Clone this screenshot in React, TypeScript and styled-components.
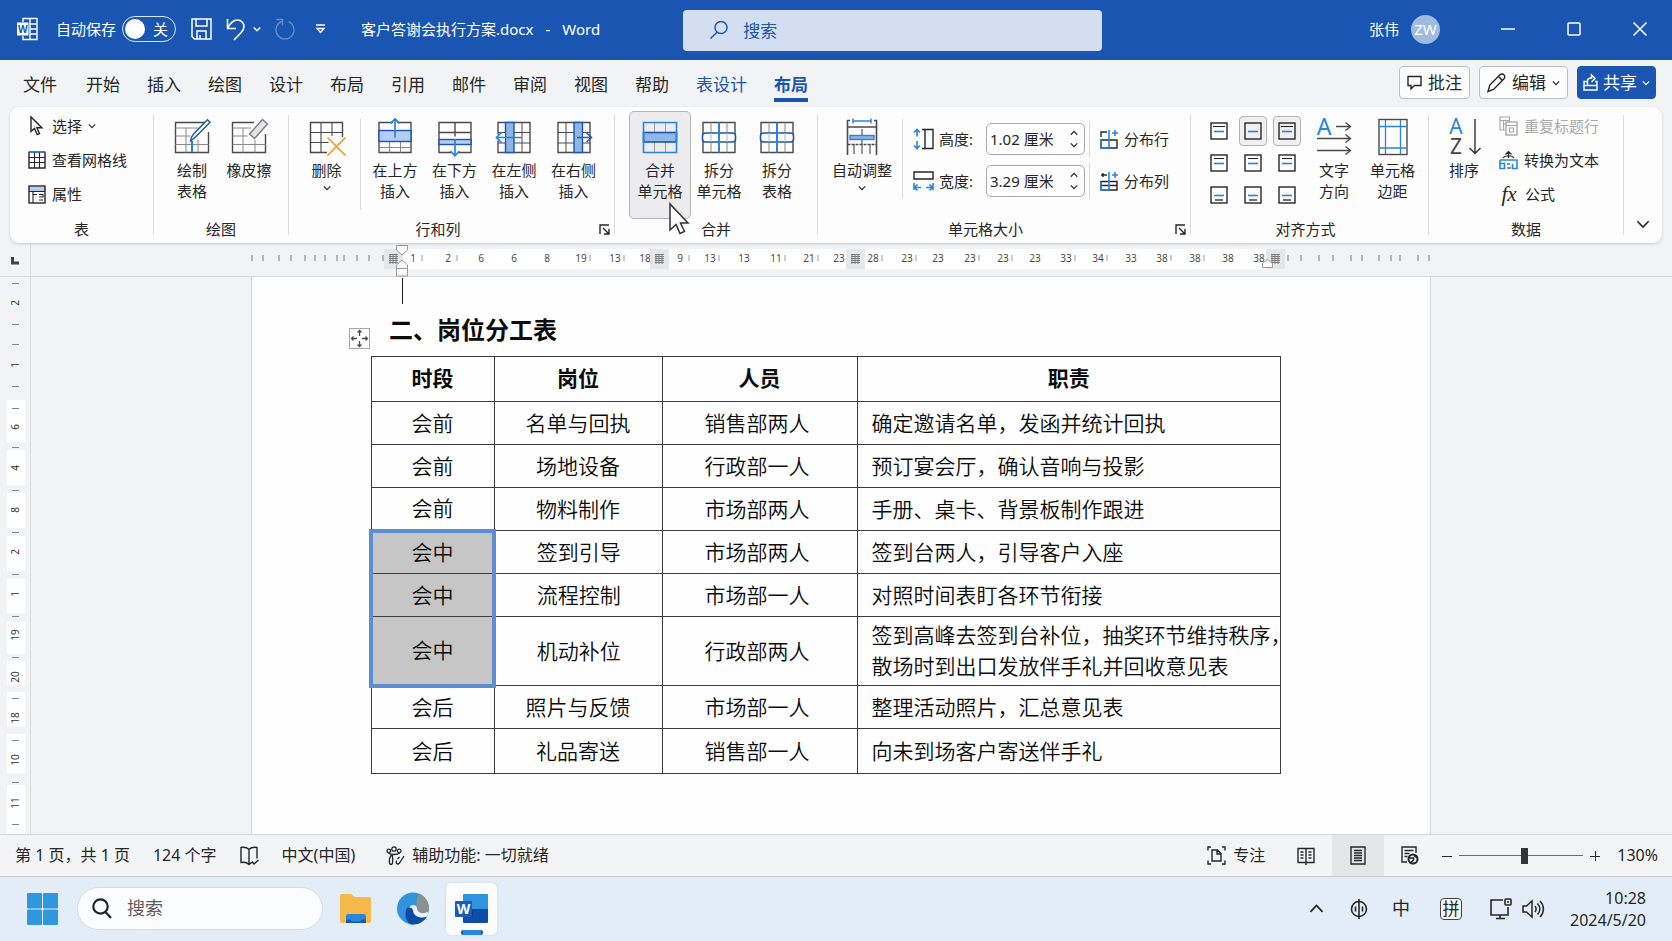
import React from "react";
import styled, { createGlobalStyle, css } from "styled-components";

const blue = "#1a56b1";
const azure = "#2b84dc";
const ink = "#262626";

const GlobalStyle = createGlobalStyle`
  * { box-sizing: border-box; }
  body {
    margin: 0;
    background: #f1f3f5;
    color: ${ink};
    font-family: "Noto Sans", "Noto Sans CJK SC", sans-serif;
    font-size: 15px;
    line-height: 21px;
  }
  button, input { font: inherit; color: inherit; }
  svg { display: block; flex: none; overflow: visible; }
`;

const Window = styled.div`
  display: flex;
  flex-direction: column;
  min-height: 100vh;
  overflow: hidden;
`;

const PlainButton = styled.button`
  display: flex;
  align-items: center;
  justify-content: center;
  padding: 0;
  border: 0;
  background: none;
  white-space: nowrap;
`;

/* ---------- title bar ---------- */

const TitleBar = styled.header`
  display: flex;
  align-items: center;
  height: 60px;
  padding: 0 24px 2px 17px;
  background: ${blue};
  color: #fff;
  white-space: nowrap;
`;

const AutoSave = styled.label`
  display: flex;
  align-items: center;
  gap: 6px;
  margin: 0 15px 0 18px;
`;

const ToggleTrack = styled.span`
  display: flex;
  align-items: center;
  gap: 8px;
  width: 54px;
  height: 26px;
  padding: 0 2px;
  border: 1px solid #dbe6f6;
  border-radius: 13px;
`;

const ToggleKnob = styled.input`
  appearance: none;
  width: 20px;
  height: 20px;
  margin: 0;
  border-radius: 50%;
  background: #fff;
`;

const QuickTools = styled.div`
  display: flex;
  align-items: center;
  gap: 14px;
  > :last-child { margin-left: 6px; }
`;

const UndoButton = styled(PlainButton)`
  gap: 8px;
`;

const DocName = styled.div`
  display: flex;
  gap: 12px;
  margin-left: 35px;
`;

const TitleSearch = styled.label`
  display: flex;
  align-items: center;
  gap: 14px;
  width: 419px;
  height: 41px;
  margin: 2px auto 0 83px;
  padding-left: 26px;
  border-radius: 4px;
  background: #d3dff0;
  color: #2056a8;
  font-size: 17px;
`;

const BareInput = styled.input`
  flex: 1;
  min-width: 0;
  width: 0;
  padding: 0;
  border: 0;
  outline: 0;
  background: none;
  &::placeholder { color: inherit; opacity: 1; }
`;

const Account = styled(PlainButton)`
  gap: 12px;
`;

const Avatar = styled.span`
  width: 29px;
  height: 29px;
  border-radius: 50%;
  background: #9fbbdf;
  line-height: 29px;
  text-align: center;
`;

const WindowButtons = styled.div`
  display: flex;
  gap: 50px;
  margin-left: 60px;
`;

/* ---------- tabs ---------- */

const TabRow = styled.div`
  display: flex;
  align-items: center;
  justify-content: space-between;
  height: 47px;
  padding: 2px 16px 0 23px;
`;

const Tabs = styled.nav`
  display: flex;
  gap: 27px;
`;

const Tab = styled.button<{ $tone?: "accent" | "current" }>`
  padding: 0;
  border: 0;
  background: none;
  font-size: 17px;
  line-height: 26px;
  white-space: nowrap;
  &:first-child { margin-right: 2px; }
  border-top: 4px solid transparent;
  border-bottom: 4px solid transparent;
  ${(p) => p.$tone && css`color: ${blue};`}
  ${(p) => p.$tone === "current" && css`font-weight: 700; border-bottom-color: ${blue};`}
`;

const TabActions = styled.div`
  display: flex;
  gap: 9px;
  margin-bottom: 4px;
`;

const ActionButton = styled(PlainButton)<{ $primary?: boolean }>`
  gap: ${(p) => (p.$primary ? 5 : 6)}px;
  height: 33px;
  padding: 0 ${(p) => (p.$primary ? 5 : 7)}px;
  border: 1px solid ${(p) => (p.$primary ? blue : "#bdbfc1")};
  border-radius: 4px;
  background: ${(p) => (p.$primary ? blue : "#fdfdfd")};
  color: ${(p) => (p.$primary ? "#fff" : ink)};
  font-size: 17px;
  line-height: 24px;
`;

/* ---------- ribbon ---------- */

const Ribbon = styled.section`
  display: flex;
  height: 136px;
  margin: 0 10px;
  border-radius: 9px;
  background: #fdfdfd;
  box-shadow: 0 1px 3px rgba(0, 0, 0, 0.18);
  position: relative;
`;

const Group = styled.div<{ $width: number }>`
  display: flex;
  flex-direction: column;
  flex: none;
  width: ${(p) => p.$width}px;
  padding-top: 4px;
`;

const GroupBody = styled.div<{ $inset: number }>`
  display: flex;
  align-items: flex-start;
  height: 107px;
  padding-left: ${(p) => p.$inset}px;
`;

const GroupFooter = styled.div<{ $trail: number }>`
  display: flex;
  align-items: center;
  height: 22px;
  > span { flex: 1; padding-right: ${(p) => p.$trail}px; text-align: center; }
  > button { margin-right: 4px; }
`;

const Divider = styled.div<{ $inner?: boolean }>`
  flex: none;
  align-self: stretch;
  width: 1px;
  margin: ${(p) => (p.$inner ? "8px 4px" : "8px 0")};
  background: #d9dadb;
`;

const ShortDivider = styled(Divider)`
  height: 79px;
  align-self: flex-start;
  margin: 8px 10px;
`;

const BigButton = styled.button<{ $width: number; $hot?: boolean }>`
  position: relative;
  display: flex;
  flex-direction: column;
  align-items: center;
  flex: none;
  gap: 3px;
  width: ${(p) => p.$width}px;
  height: 108px;
  padding: 4px 0 0;
  border: 1px solid ${(p) => (p.$hot ? "#b4b5b6" : "transparent")};
  border-radius: 5px;
  background: ${(p) => (p.$hot ? "#ececee" : "none")};
  line-height: 21px;
  white-space: nowrap;
`;

const PointerArrow = styled.svg`
  position: absolute;
  left: 38px;
  top: 90px;
  z-index: 2;
`;

const Stack = styled.div<{ $lead?: number }>`
  display: flex;
  flex-direction: column;
  gap: 4px;
  margin-left: ${(p) => p.$lead ?? 0}px;
`;

const RowButton = styled.button<{ $dim?: boolean }>`
  display: flex;
  align-items: center;
  gap: 6px;
  height: 30px;
  padding: 0;
  border: 0;
  background: none;
  white-space: nowrap;
  ${(p) => p.$dim && css`color: #a8a9aa;`}
`;

const SizeRows = styled.div`
  display: flex;
  flex-direction: column;
  gap: 10px;
  padding-top: 12px;
`;

const SizeRow = styled.div`
  display: flex;
  align-items: center;
  height: 32px;
`;

const SizeLabel = styled.label`
  width: 52px;
  padding-left: 5px;
  flex: none;
`;

const Spinner = styled.div`
  display: flex;
  width: 99px;
  height: 32px;
  padding: 0 6px 0 3px;
  border: 1px solid #a9abad;
  border-radius: 5px;
`;

const SpinnerArrows = styled.div`
  display: flex;
  flex-direction: column;
  justify-content: space-evenly;
`;

const RowDivider = styled.div`
  width: 1px;
  height: 36px;
  margin: 0 10px 0 4px;
  background: #d9dadb;
`;

const AlignGrid = styled.div`
  display: grid;
  grid-template-columns: repeat(3, 28px);
  gap: 2px 6px;
  padding-top: 5px;
  margin-right: 4px;
`;

const AlignButton = styled(PlainButton)<{ $on?: boolean }>`
  height: 30px;
  border: 1px solid ${(p) => (p.$on ? "#b1b2b3" : "transparent")};
  border-radius: 4px;
  background: ${(p) => (p.$on ? "#f0f0f0" : "none")};
`;

const Formula = styled.span`
  width: 20px;
  font: italic 21px/24px "Liberation Serif", serif;
`;

const Collapse = styled(PlainButton)`
  margin: auto 12px 12px auto;
`;

/* ---------- document ---------- */

const Workspace = styled.main`
  display: grid;
  flex: 1;
  grid-template-columns: 31px minmax(0, 1fr);
  grid-template-rows: 34px 1fr;
`;

const RulerCorner = styled.div`
  padding: 14px 0 0 11px;
  border-right: 1px solid #d9dbdd;
  border-bottom: 1px solid #d9dbdd;
`;

const TopRuler = styled.div`
  display: flex;
  justify-content: center;
  padding-right: 21px;
  border-bottom: 1px solid #d4d6d8;
`;

const SideRuler = styled.div`
  border-right: 1px solid #d9dbdd;
`;

const Desk = styled.div`
  display: flex;
  justify-content: center;
  padding-right: 21px;
`;

const Paper = styled.article`
  width: 1180px;
  padding: 0 148px 48px 97px;
  border: solid #d4d6d8;
  border-width: 0 1px;
  background: #fefefe;
  color: #0c0c0c;
`;

const CaretLine = styled.div`
  width: 54px;
  height: 26px;
  margin-top: 1px;
  border-right: 1px solid #222;
`;

const HeadingRow = styled.div`
  display: flex;
  align-items: flex-end;
  height: 52px;
  padding-bottom: 7px;
`;

const Heading = styled.h2`
  margin: 0 0 1px 19px;
  font-size: 24px;
  font-weight: 700;
  line-height: 36px;
`;

const Sheet = styled.table`
  width: 912px;
  margin-left: 20px;
  border-collapse: collapse;
  table-layout: fixed;
  font-family: "Noto Sans CJK SC", sans-serif;
  font-size: 21px;
  line-height: 31px;
`;

const HeadCell = styled.th`
  height: 45px;
  padding: 0 0 3px;
  border: 1px solid #3c3c3c;
  font-weight: 700;
`;

const Cell = styled.td<{ $left?: boolean; $trail?: number; $pick?: "first" | "mid" | "last" }>`
  height: 43px;
  padding: 2px ${(p) => p.$trail ?? 0}px 4px ${(p) => (p.$left ? 14 : 0)}px;
  border: 1px solid #3c3c3c;
  text-align: ${(p) => (p.$left ? "left" : "center")};
  font-weight: 350;
  white-space: nowrap;
  tr:last-child > & { height: 45px; }
  ${(p) =>
    p.$pick &&
    css`
      background: #c6c6c6;
      border-left: 4px solid #5b8fd0;
      border-right: 4px solid #5b8fd0;
    `}
  ${(p) => p.$pick === "first" && css`border-top: 4px solid #5b8fd0;`}
  ${(p) => p.$pick === "last" && css`border-bottom: 4px solid #5b8fd0;`}
`;

/* ---------- status bar ---------- */

const StatusBar = styled.footer`
  display: flex;
  align-items: center;
  justify-content: space-between;
  height: 43px;
  padding: 0 14px 0 15px;
  border-top: 1px solid #d4d6d8;
  border-bottom: 1px solid #c9ccd0;
  background: #f3f4f5;
  font-size: 16px;
  white-space: nowrap;
`;

const StatusSide = styled.div<{ $gap: number }>`
  display: flex;
  align-items: center;
  gap: ${(p) => p.$gap}px;
  height: 100%;
`;

const StatusButton = styled(PlainButton)<{ $after?: number; $before?: number }>`
  gap: 7px;
  margin: 0 ${(p) => p.$after ?? 0}px 0 ${(p) => p.$before ?? 0}px;
`;

const ViewButton = styled(PlainButton)<{ $on?: boolean }>`
  width: 52px;
  height: 100%;
  background: ${(p) => (p.$on ? "#e5e6e7" : "none")};
`;

const Zoom = styled.div`
  display: flex;
  align-items: center;
  gap: 7px;
  margin: 0 17px 0 6px;
`;

const ZoomSlider = styled.input`
  appearance: none;
  width: 124px;
  height: 16px;
  margin: 0;
  background: linear-gradient(#6b6b6b, #6b6b6b) center / 100% 1px no-repeat;
  &::-webkit-slider-thumb {
    appearance: none;
    width: 7px;
    height: 16px;
    background: #333;
  }
`;

/* ---------- taskbar ---------- */

const Taskbar = styled.footer`
  display: flex;
  align-items: center;
  height: 64px;
  padding: 0 26px 1px 27px;
  background: #e3edf8;
  white-space: nowrap;
`;

const TaskSearch = styled.label`
  display: flex;
  align-items: center;
  gap: 15px;
  width: 246px;
  height: 43px;
  margin: 0 17px 0 19px;
  padding-left: 14px;
  border: 1px solid #d5dbe3;
  border-radius: 22px;
  background: #fbfcfd;
  color: #5c5c5c;
  font-size: 18px;
`;

const Apps = styled.div`
  display: flex;
  align-items: center;
  gap: 26px;
`;

const ActiveApp = styled(PlainButton)`
  flex-direction: column;
  justify-content: flex-end;
  gap: 5px;
  width: 51px;
  height: 52px;
  margin-left: -9px;
  border-radius: 5px;
  background: #fafcfe;
  box-shadow: 0 0 2px rgba(0, 0, 0, 0.15);
`;

const ActiveMark = styled.span`
  width: 22px;
  height: 5px;
  border-radius: 2px;
  background: linear-gradient(90deg, ${blue} 10%, #2a86d8 10%, #2a86d8 90%, ${blue} 90%);
`;

const Tray = styled.div`
  display: flex;
  align-items: center;
  gap: 26px;
  margin-left: auto;
`;

const ImeMode = styled(PlainButton)`
  margin: 0 4px 0 -2px;
  font-size: 18px;
`;

const ImeBox = styled(PlainButton)`
  width: 22px;
  height: 22px;
  margin-right: 2px;
  border: 1px solid #444;
  border-radius: 4px;
  background: #f6f9fc;
  font-size: 17px;
`;

const SystemButton = styled(PlainButton)`
  gap: 10px;
`;

const Clock = styled.time`
  font-size: 16px;
  line-height: 22px;
  text-align: right;
`;

/* ---------- drawings ---------- */

const line = { fill: "none", stroke: "currentColor", strokeWidth: 1.4 } as const;

const Chevron = ({ w = 8, up = false, width = 1.4 }: { w?: number; up?: boolean; width?: number }) => (
  <svg width={w} height={w} viewBox="0 0 10 10" {...line} strokeWidth={width}>
    <path d={up ? "M1 7.2 5 3l4 4.2" : "M1 3l4 4.2L9 3"} />
  </svg>
);

const WordOutline = () => (
  <svg width="21" height="24" viewBox="0 0 21 24" fill="none" stroke="#fff" strokeWidth="1.4">
    <path d="M6 5V1.5h14v21H6V19M13 7h7M13 12h7M13 17h7M13 1.5v21" />
    <rect x="0" y="5.500" width="11.500" height="13" fill="#fff" stroke="none" />
    <text x="5.800" y="15.500" textAnchor="middle" fontSize="10" fontWeight="700" fill={blue} stroke="none">W</text>
  </svg>
);

const SaveIcon = () => (
  <svg width="21" height="22" viewBox="0 0 21 22" fill="none" stroke="#fff" strokeWidth="1.5">
    <path d="M1 1h19v20H3.500L1 18.500zM5 1v7h11V1M6 21v-8h9v8M9 21v-4" />
  </svg>
);

const UndoIcon = () => (
  <svg width="19" height="23" viewBox="0 0 19 23" fill="none" stroke="#fff" strokeWidth="1.6">
    <path d="M1.500 1v9.500H10M1.800 10C4 5.500 7.500 2 11.500 2c4 0 6.500 3 6.500 6.500 0 2.500-1 4.200-3 6.200L8 22" />
  </svg>
);

const RedoIcon = () => (
  <svg width="20" height="22" viewBox="0 0 20 22" fill="none" stroke="#5f8ccf" strokeWidth="1.4">
    <path d="M1.500 1.500h6v6M6.800 3.500A9 9 0 1 0 13.500 3.600" />
  </svg>
);

const MenuMore = () => (
  <svg width="11" height="10" viewBox="0 0 11 10" fill="none" stroke="#fff" strokeWidth="1.4">
    <path d="M1 1h9M2 4.500h7L5.500 8.500z" />
  </svg>
);

const TitleSearchIcon = () => (
  <svg width="20" height="20" viewBox="0 0 20 20" fill="none" stroke="#2056a8" strokeWidth="1.5">
    <circle cx="12" cy="7.500" r="6" />
    <path d="M8 12.200 1.500 18.500" />
  </svg>
);

const CommentIcon = () => (
  <svg width="15" height="15" viewBox="0 0 15 15" {...line}>
    <path d="M1 1.500h13v9H7.500L4 13.800v-3.300H1z" />
  </svg>
);

const PencilIcon = () => (
  <svg width="19" height="20" viewBox="0 0 19 20" {...line}>
    <path d="M1 18.500 2.800 12 13 1.800c1.200-1.200 3-1 4 .1 1 1 1.100 2.700 0 3.800L6.800 16.200zM11.500 3.500l4.200 4.200" />
  </svg>
);

const ShareIcon = () => (
  <svg width="15" height="17" viewBox="0 0 15 17" {...line}>
    <path d="M4.500 7.500H1V16h13V7.500h-2M1 11.500h13M4.500 11.500V7C4.500 4.500 6 4 8.500 4V1L12 4.500 8.500 8" />
  </svg>
);

const BigIcon = ({ children }: { children: React.ReactNode }) => (
  <svg width="40" height="41" viewBox="0 0 40 41" fill="none" stroke="#4a4a4a" strokeWidth="1.4">
    {children}
  </svg>
);

const grid = "M4 6.500h32v30H4z";

const DrawTableIcon = () => (
  <BigIcon>
    <path d="M34 6.500H3.500v30h33V16" />
    <path d="M3.500 12H26M3.500 20h15M3.500 28.500h33M14 12v24.500M26 24v12.500" stroke="#8a8a8a" strokeWidth="1" />
    <path d="M18.500 25c.3-3.500 1.800-5.500 3.500-7.500L35.500 3.800l2.500 2.400L24.500 20c-2 2-4 3.500-6 5z" fill="#fff" stroke={blue} />
    <path d="M20 25v11" stroke={azure} strokeWidth="2" />
  </BigIcon>
);

const EraserIcon = () => (
  <BigIcon>
    <path d="M25 6.500H3.500v30h33V18" />
    <path d="M3.500 12H22M3.500 20h15M3.500 28.500h33M14 12v24.500M26 24v12.500" stroke="#8a8a8a" strokeWidth="1" />
    <path d="M20.500 18 33.500 3.500 38.500 8 25.500 22.500z" fill="#e4e5ea" stroke="#7a7a7a" />
  </BigIcon>
);

const DeleteIcon = () => (
  <BigIcon>
    <path d="M20 36.500H3.500v-30h32V21" />
    <path d="M3.500 16.500h32M3.500 26.500h18M14 6.500v30M25 6.500V20" strokeWidth="1.100" />
    <path d="M20.500 21.500l18 18M38.500 21.500l-18 18" stroke="#f0ad3c" strokeWidth="1.900" />
  </BigIcon>
);

const InsertAboveIcon = () => (
  <BigIcon>
    <path d={grid} />
    <path d="M14.500 26v10.500M25.500 26v10.500M4 31.500h32" stroke="#888" strokeWidth="1" />
    <rect x="4" y="14.500" width="32" height="11" fill="#b4cdee" stroke={blue} />
    <path d="M20 14V3" stroke="#fdfdfd" strokeWidth="4" />
    <path d="M20 21.500V3M15.500 7.500 20 2.800l4.500 4.700" stroke={azure} strokeWidth="1.700" />
  </BigIcon>
);

const InsertBelowIcon = () => (
  <BigIcon>
    <path d={grid} />
    <path d="M4 16.500h32M20 6.500v14" />
    <rect x="4" y="23.500" width="32" height="5" fill="#b4cdee" stroke={blue} />
    <path d="M20 30v10" stroke="#fdfdfd" strokeWidth="7" />
    <path d="M20 23v16.500M15.500 35 20 39.800l4.500-4.800" stroke={azure} strokeWidth="1.700" />
  </BigIcon>
);

const InsertLeftIcon = () => (
  <BigIcon>
    <path d={grid} />
    <path d="M4 16.500h32M4 27h32M28 6.500v30" strokeWidth="1" />
    <rect x="11.500" y="6.500" width="8.500" height="30" fill="#8fb5e6" stroke={blue} />
    <path d="M0 21.500h11" stroke="#fdfdfd" strokeWidth="6" />
    <path d="M28 21.500H2.500M7.500 16.500l-5 5 5 5" stroke={azure} strokeWidth="1.700" />
  </BigIcon>
);

const InsertRightIcon = () => (
  <BigIcon>
    <path d={grid} />
    <path d="M4 16.500h32M4 27h32M12 6.500v30" strokeWidth="1" />
    <rect x="20" y="6.500" width="8.500" height="30" fill="#8fb5e6" stroke={blue} />
    <path d="M29.500 21.500H35" stroke="#fdfdfd" strokeWidth="9" />
    <path d="M23 21.500h14M32.500 17l5 4.500-5 4.500" stroke="#2d5f9e" strokeWidth="1.600" />
  </BigIcon>
);

const MergeIcon = () => (
  <BigIcon>
    <path d="M14.500 6.500v30M25.500 6.500v30" stroke="#999" strokeWidth="1" />
    <rect x="3.500" y="16.500" width="33" height="9.500" fill="#8db9ea" stroke={blue} strokeWidth="1.600" />
    <path d="M3.500 6.500h33v30h-33z" stroke={azure} strokeWidth="1.600" />
  </BigIcon>
);

const SplitCellIcon = () => (
  <BigIcon>
    <path d={grid} />
    <path d="M12 6.500v30M28 6.500v30" stroke="#888" strokeWidth="1" />
    <rect x="3.500" y="17" width="33" height="9" rx="3" fill="#fdfdfd" stroke={blue} strokeWidth="1.600" />
    <path d="M12 17v9M28 17v9" stroke="#bbb" strokeWidth="1" />
    <path d="M20 6.500v30" stroke={azure} strokeWidth="2" />
  </BigIcon>
);

const AutoFitIcon = () => (
  <BigIcon>
    <path d="M5.500 4v35M34.500 4v35M5.500 11h29" strokeWidth="1.600" />
    <path d="M5.500 28.500h29" strokeDasharray="3 1" />
    <path d="M12 28v10M20 13v25M28 28v10" strokeWidth="1.100" />
    <path d="M5 4.500h3M32 4.500h3" />
    <path d="M11 5h18M11 2.500v5M29 2.500v5" stroke={azure} strokeWidth="1.500" />
    <rect x="8" y="19.500" width="24" height="4" fill="#8fb5e6" stroke={azure} />
  </BigIcon>
);

const TextDirectionIcon = () => (
  <BigIcon>
    <text x="10" y="19" textAnchor="middle" fontSize="23" fill={azure} stroke="none">A</text>
    <path d="M22 10.500h14M31.500 6.500l5 4-5 4M3 22.500h33.500M31.500 18.500l5 4-5 4M3 34.500h33.500M31.500 30.500l5 4-5 4" />
  </BigIcon>
);

const CellMarginIcon = () => (
  <BigIcon>
    <rect x="6" y="3.500" width="28" height="35" />
    <path d="M12.500 4v34M27.500 4v34M6.500 10.500h27M6.500 32h27" stroke={azure} strokeWidth="1.300" />
  </BigIcon>
);

const SortIcon = () => (
  <BigIcon>
    <text x="12" y="18" textAnchor="middle" fontSize="21" fill={azure} stroke="none">A</text>
    <text x="12" y="38" textAnchor="middle" fontSize="21" fill="#444" stroke="none">Z</text>
    <path d="M31 3v34M25.500 32l5.500 5.500 5.500-5.500" stroke="#333" />
  </BigIcon>
);

const ArrowIcon = () => (
  <svg width="18" height="20" viewBox="0 0 18 20" {...line}>
    <path d="M3 1v14.500l3.500-3 2.700 6.200 2.300-1-2.600-6h5z" />
  </svg>
);

const GridLinesIcon = () => (
  <svg width="18" height="18" viewBox="0 0 18 18" {...line}>
    <path d="M1 6.500h16M1 11.500h16M6.500 1v16M11.500 1v16" strokeWidth="1" />
    <path d="M1 1v16h16V1" />
    <path d="M.500 1h17" stroke={blue} strokeWidth="1.600" />
  </svg>
);

const PropertiesIcon = () => (
  <svg width="18" height="19" viewBox="0 0 18 19" {...line}>
    <path d="M1 4h16" stroke="#b4cdee" strokeWidth="4" />
    <rect x="1" y="1" width="16" height="17" />
    <path d="M1 6.500h16M5 6.500V18M5 9.500h4M11 9.500h4v2.500h-4M11 15h4" strokeWidth="1.100" />
  </svg>
);

const HeightIcon = () => (
  <svg width="21" height="22" viewBox="0 0 21 22" {...line}>
    <path d="M12 1.500h8v19h-8z" />
    <path d="M4 1.500v7M4 13v7M1 4.500l3-3 3 3M1 17.500l3 3 3-3" stroke={azure} strokeWidth="1.600" />
    <path d="M9 1.500h3M9 20.500h3" />
  </svg>
);

const WidthIcon = () => (
  <svg width="21" height="22" viewBox="0 0 21 22" {...line}>
    <path d="M1 2h19v7H1z" />
    <path d="M1 13v7M20 13v7M2 17.500h6M13 17.500h6M4.500 14.500l-3 3 3 3M16.500 14.500l3 3-3 3" stroke={azure} strokeWidth="1.600" />
  </svg>
);

const SpreadIcon = ({ rows }: { rows?: boolean }) => (
  <svg width="18" height="20" viewBox="0 0 18 20" {...line}>
    {rows ? <path d="M1 8V3h6M1 11h16v8H1z" /> : <path d="M1 10.500h16V19H1zM1 14.500h16M1 4h6M3 2v4" />}
    <path d="M9 1v18M12 4h6M15 1v6" stroke={azure} strokeWidth="1.600" />
    <path d="M1 10.500V19h8" stroke={azure} />
  </svg>
);

const AlignIcon = ({ row }: { row: number }) => (
  <svg width="18" height="18" viewBox="0 0 18 18" {...line}>
    <rect x="1" y="1" width="16" height="16" />
    {row === 0 && <path d="M3 4.500h12" strokeWidth="1.100" />}
    {row === 1 && <path d="M4 4.500h10" strokeWidth="1.100" />}
    {row === 2 && <path d="M5 14h8" strokeWidth="1.300" />}
    <path d="M4 9.500h10" stroke={azure} strokeWidth="1.600" />
  </svg>
);

const RepeatHeaderIcon = () => (
  <svg width="19" height="20" viewBox="0 0 19 20" {...line}>
    <path d="M6 14H1V1h9.500v5M1 4.500h9M4.500 4.500V14M4 8h3" strokeWidth="1.200" />
    <rect x="7" y="6" width="11" height="13" />
    <path d="M7 9.500h11M10.500 12h4v4h-4z" strokeWidth="1.200" />
  </svg>
);

const ToTextIcon = () => (
  <svg width="19" height="20" viewBox="0 0 19 20" {...line}>
    <path d="M9.500 8V2M6.500 4.500l3-3 3 3M4 8c2-3 9-3 11 0" strokeWidth="1.200" />
    <path d="M1 10h17v8.500h-4.500V14M1 10v8.500h4.500v-5H1" stroke={azure} strokeWidth="1.600" />
    <path d="M8 14h3M8 18h4" strokeWidth="1.200" />
  </svg>
);

const LauncherIcon = () => (
  <svg width="11" height="11" viewBox="0 0 11 11" {...line}>
    <path d="M1 10V1h9M4 4l6 6M10 5v5H5" />
  </svg>
);

const MoveHandle = () => (
  <svg width="21" height="21" viewBox="0 0 21 21" fill="none" stroke="#4a4a4a" strokeWidth="1.300">
    <rect x=".5" y=".5" width="20" height="20" stroke="#a5a5a5" strokeWidth="1" fill="#fff" />
    <path d="M10.500 2.500V8M10.500 13v5.500M2.500 10.500H8M13 10.500h5.500M8.500 4.500l2-2 2 2M8.500 16.500l2 2 2-2M4.500 8.500l-2 2 2 2M16.500 8.500l2 2-2 2" />
  </svg>
);

const pageTicksLeft = [1, 12, 28, 40, 54, 64, 74, 86, 93, 106, 118, 132];
const pageTicksRight = [1037, 1050, 1068, 1082, 1100, 1111, 1128, 1140, 1149, 1167, 1178];
const scaleMarks: [number, string][] = [
  [162, "1"], [197, "2"], [230, "6"], [263, "6"], [296, "8"], [330, "19"], [364, "13"], [394, "18"],
  [429, "9"], [459, "13"], [493, "13"], [525, "11"], [558, "21"], [588, "23"], [622, "28"], [656, "23"],
  [687, "23"], [719, "23"], [752, "23"], [784, "23"], [815, "33"], [847, "34"], [880, "33"], [911, "38"],
  [944, "38"], [977, "38"], [1008, "38"],
];
const columnMarks = [142, 408, 604, 1024];

const HorizontalScale = () => (
  <svg width="1180" height="34" viewBox="0 0 1180 34">
    <rect x="151" y="6" width="865" height="20" fill="#fff" />
    {[...pageTicksLeft, ...pageTicksRight].map((x) => (
      <path key={x} d={`M${x} 12v6`} stroke="#777" />
    ))}
    {scaleMarks.map(([x, n], i) => (
      <g key={x}>
        <text x={x} y="19" textAnchor="middle" fontSize="10" fill="#4a4a4a">{n}</text>
        {(i < 2 || (i > 4 && i < 26 && i !== 7 && i % 3 !== 1)) && <path d={`M${x + 9} 12v6`} stroke="#999" />}
      </g>
    ))}
    {columnMarks.map((x) => (
      <g key={x}>
        <rect x={x - 9} y="6" width="19" height="20" fill="#e6e7e8" />
        <path
          d={`M${x - 4} 11.500h9M${x - 4} 13.500h9M${x - 4} 15.500h9M${x - 4} 17.500h9M${x - 4} 19.500h9M${x - 3} 11v10M${x} 11v10M${x + 3} 11v10`}
          stroke="#7c7c7c"
        />
      </g>
    ))}
    <g fill="#fff" stroke="#9a9a9a">
      <path d="M145.500 2.500h11V7l-5.500 5-5.500-5z" />
      <path d="M145.500 33V22l5.500-5 5.500 5v11zM145.500 25.500h11" />
      <path d="M1011.500 24.500v-4l5-4 5 4v4z" />
    </g>
  </svg>
);

const sideBlocks: [number, number][] = [
  [123, 42], [173, 35], [216, 35], [259, 35], [302, 34], [345, 32], [384, 24], [415, 35], [457, 39], [508, 49],
];
const sideTicks = [6, 47, 67, 109, 131, 170, 213, 255, 297, 339, 380, 421, 463, 505, 547];
const sideMarks: [number, string][] = [
  [26, "2"], [88, "1"], [150, "6"], [191, "4"], [233, "8"], [275, "2"], [317, "1"], [358, "19"], [400, "20"],
  [441, "18"], [483, "10"], [526, "11"],
];

const VerticalScale = () => (
  <svg width="30" height="557" viewBox="0 0 30 557">
    {sideBlocks.map(([y, h]) => (
      <rect key={y} x="7" y={y} width="18" height={h} fill="#fff" />
    ))}
    {sideTicks.map((y) => (
      <path key={y} d={`M12 ${y}.500h7`} stroke="#888" />
    ))}
    {sideMarks.map(([y, n]) => (
      <text key={y} transform={`translate(19 ${y}) rotate(-90)`} textAnchor="middle" fontSize="10" fill="#333">{n}</text>
    ))}
  </svg>
);

const ProofIcon = () => (
  <svg width="19" height="20" viewBox="0 0 19 20" {...line}>
    <path d="M9 3.500C7 1.500 4 1 1 1.500v15c3-.500 6 0 8 2 2-2 3-2.200 4-2.300M9 3.500c2-2 5-2.500 8-2v11M9 3.500v15M12 15.500l2 2.500 4.500-4" />
  </svg>
);

const AccessIcon = () => (
  <svg width="19" height="20" viewBox="0 0 19 20" {...line} strokeWidth="1.300">
    <circle cx="8" cy="3" r="2.200" />
    <circle cx="2.800" cy="5" r="1.800" />
    <circle cx="13.200" cy="5" r="1.800" />
    <path d="M2.500 7C4 8.500 6 8.500 8 8.500S12 8.500 13.500 7M5.500 8.500c-2 3-2.500 6-2 8.500.5 2 2.500 2 3 0 .5-3 .5-5-.5-8.500M10.500 14.500c-1 3 1 4.500 3 2.500l4.500-7M11.500 13l2-2" />
  </svg>
);

const FocusIcon = () => (
  <svg width="19" height="19" viewBox="0 0 19 19" {...line}>
    <path d="M4 1H1v3.500M15 1h3v3.500M4 18H1v-3.500M15 18h3v-3.500M5 4h5.500L14 7.500V15H5zM10 4v4h4" />
  </svg>
);

const ReadIcon = () => (
  <svg width="18" height="18" viewBox="0 0 18 18" {...line}>
    <path d="M1 1.500h16v14H1zM9 1.500V18M3.500 5h3M3.500 8h3M3.500 11h3M11.500 5h3M11.500 8h3M11.500 11h3" />
  </svg>
);

const PrintIcon = () => (
  <svg width="16" height="19" viewBox="0 0 16 19" {...line}>
    <path d="M1 1h14v17H1zM4 4.500h8M4 7h8M4 9.500h8M4 12h8M4 14.500h8" />
  </svg>
);

const WebIcon = () => (
  <svg width="18" height="19" viewBox="0 0 18 19" {...line}>
    <path d="M6 16H1V1h14v6M3.500 4.500h9M3.500 7.500h5M3.500 10.500h3" />
    <circle cx="12" cy="13" r="4.500" strokeWidth="2" />
    <path d="M8 12h4.500v2L9 17M13 9.500l3 2" strokeWidth="1.600" />
  </svg>
);

const StartIcon = () => (
  <svg width="31" height="32" viewBox="0 0 31 32" fill="#2f97de">
    <rect width="15" height="15.500" rx="1" />
    <rect x="16" width="15" height="15.500" rx="1" />
    <rect y="16.500" width="15" height="15.500" rx="1" />
    <rect x="16" y="16.500" width="15" height="15.500" rx="1" />
  </svg>
);

const MagnifierIcon = () => (
  <svg width="20" height="21" viewBox="0 0 20 21" fill="none" stroke="#222" strokeWidth="2.200">
    <circle cx="8.500" cy="8.500" r="7.200" />
    <path d="M13.500 14 19 20" />
  </svg>
);

const FolderIcon = () => (
  <svg width="31" height="30" viewBox="0 0 31 30">
    <path d="M0 2a2 2 0 0 1 2-2h9l4 3h14a2 2 0 0 1 2 2v22a2 2 0 0 1-2 2H2a2 2 0 0 1-2-2z" fill="#f5b94c" />
    <path d="M6 29v-7a2 2 0 0 1 2-2h16a2 2 0 0 1 2 2v7z" fill="#2a86d8" />
    <path d="M6 25.500h4l2 2h8l2-2h4V29H6z" fill="#1757ae" />
  </svg>
);

const EdgeIcon = () => (
  <svg width="32" height="33" viewBox="0 0 32 33">
    <circle cx="16" cy="16.500" r="16" fill="#2f94de" />
    <path d="M22 1.700C28 4 32 10 32 16.500c0 4-2 6.500-5.500 6.500-5 0-7-3-7.500-7 0-4 .5-10 3-14.300z" fill="#8a9193" />
    <path d="M10 15.500c-3 6-1.500 14 3.500 16.800C20 33.500 27.500 30 30.500 23.500c-6 2.500-13 0-14-7.500z" fill="#0d4aa6" />
    <path d="M12.500 15.500c1-3.500 7-3.500 7.500.5.3 4.500 4.500 7 11.800 3.500l-1.500 5c-6.300 2.500-13.800.5-14.300-6-.2-2-1.700-3-3.500-3z" fill="#e9f1fa" />
  </svg>
);

const WordAppIcon = () => (
  <svg width="33" height="31" viewBox="0 0 33 31">
    <path d="M8 1a1 1 0 0 1 1-1h23a1 1 0 0 1 1 1v14H8z" fill="#2f94de" />
    <path d="M8 15h25v13a1 1 0 0 1-1 1H9a1 1 0 0 1-1-1z" fill="#0f4ba8" />
    <path d="M8 15h10v8H8z" fill="#0b3d8c" />
    <rect x="0" y="7" width="17" height="16" rx="1" fill="#1a5cbb" />
    <text x="8.500" y="20" textAnchor="middle" fontSize="14" fontWeight="700" fill="#fff">W</text>
  </svg>
);

const ImeIcon = () => (
  <svg width="18" height="20" viewBox="0 0 18 20" {...line} strokeWidth="1.600">
    <circle cx="9" cy="10" r="7.500" />
    <path d="M9 0v20M5.500 7.500v5M12.500 7.500v5" />
  </svg>
);

const MonitorIcon = () => (
  <svg width="22" height="22" viewBox="0 0 22 22" {...line} strokeWidth="1.600">
    <path d="M13 2H1v15h17V9M6 20.500h9M10 17v3" />
    <rect x="15" y="1" width="6" height="6" rx="1" />
    <path d="M17 4h2" />
  </svg>
);

const SpeakerIcon = () => (
  <svg width="22" height="20" viewBox="0 0 22 20" {...line} strokeWidth="1.500">
    <path d="M1 7h3.500L10 2v16l-5.500-5H1zM13 7c1.500 2 1.500 4 0 6M15.500 4.500c3 3.500 3 7.500 0 11M18 2c4.500 4.500 4.500 11.500 0 16" />
  </svg>
);

const Pointer = () => (
  <PointerArrow width="21" height="33" viewBox="0 0 21 33" fill="#fff" stroke="#333" strokeWidth="1.500">
    <path d="M2 2v26l6-5.500L12 31.500l4.500-2-4-8.500H20z" />
  </PointerArrow>
);

/* ---------- data ---------- */

const tabs: { name: string; tone?: "accent" | "current" }[] = [
  ...["文件", "开始", "插入", "绘图", "设计", "布局", "引用", "邮件", "审阅", "视图", "帮助"].map((name) => ({ name })),
  { name: "表设计", tone: "accent" },
  { name: "布局", tone: "current" },
];

const staff: { stage: string; post: string; people: string; duty: string[]; pick?: "first" | "mid" | "last" }[] = [
  { stage: "会前", post: "名单与回执", people: "销售部两人", duty: ["确定邀请名单，发函并统计回执"] },
  { stage: "会前", post: "场地设备", people: "行政部一人", duty: ["预订宴会厅，确认音响与投影"] },
  { stage: "会前", post: "物料制作", people: "市场部两人", duty: ["手册、桌卡、背景板制作跟进"] },
  { stage: "会中", post: "签到引导", people: "市场部两人", duty: ["签到台两人，引导客户入座"], pick: "first" },
  { stage: "会中", post: "流程控制", people: "市场部一人", duty: ["对照时间表盯各环节衔接"], pick: "mid" },
  {
    stage: "会中",
    post: "机动补位",
    people: "行政部两人",
    duty: ["签到高峰去签到台补位，抽奖环节维持秩序，", "散场时到出口发放伴手礼并回收意见表"],
    pick: "last",
  },
  { stage: "会后", post: "照片与反馈", people: "市场部一人", duty: ["整理活动照片，汇总意见表"] },
  { stage: "会后", post: "礼品寄送", people: "销售部一人", duty: ["向未到场客户寄送伴手礼"] },
];

/* ---------- parts ---------- */

type BigToolProps = {
  icon: React.ReactNode;
  lines: string[];
  width?: number;
  menu?: boolean;
  hot?: boolean;
};

const BigTool = ({ icon, lines, width = 60, menu, hot }: BigToolProps) => (
  <BigButton $width={width} $hot={hot}>
    {icon}
    <span>
      {lines.map((text, i) => (
        <React.Fragment key={text}>
          {i > 0 && <br />}
          {text}
        </React.Fragment>
      ))}
    </span>
    {menu && <Chevron />}
    {hot && <Pointer />}
  </BigButton>
);

type RibbonGroupProps = {
  name: string;
  width: number;
  inset: number;
  trail?: number;
  launcher?: boolean;
  children: React.ReactNode;
};

const RibbonGroup = ({ name, width, inset, trail = 0, launcher, children }: RibbonGroupProps) => (
  <>
    <Group $width={width}>
      <GroupBody $inset={inset}>{children}</GroupBody>
      <GroupFooter $trail={trail}>
        <span>{name}</span>
        {launcher && (
          <PlainButton aria-label={`${name}设置`}>
            <LauncherIcon />
          </PlainButton>
        )}
      </GroupFooter>
    </Group>
    <Divider />
  </>
);

type SizeFieldProps = { id: string; label: string; value: string; icon: React.ReactNode; spread: string; rows?: boolean };

const SizeField = ({ id, label, value, icon, spread, rows }: SizeFieldProps) => (
  <SizeRow>
    {icon}
    <SizeLabel htmlFor={id}>{label}:</SizeLabel>
    <Spinner>
      <BareInput id={id} defaultValue={value} />
      <SpinnerArrows>
        <PlainButton aria-label={`增加${label}`}><Chevron up /></PlainButton>
        <PlainButton aria-label={`减少${label}`}><Chevron /></PlainButton>
      </SpinnerArrows>
    </Spinner>
    <RowDivider />
    <RowButton>
      <SpreadIcon rows={rows} />
      {spread}
    </RowButton>
  </SizeRow>
);

const AppTitle = () => (
  <TitleBar>
    <WordOutline />
    <AutoSave>
      自动保存
      <ToggleTrack>
        <ToggleKnob type="checkbox" />
        关
      </ToggleTrack>
    </AutoSave>
    <QuickTools>
      <PlainButton aria-label="保存"><SaveIcon /></PlainButton>
      <UndoButton aria-label="撤消"><UndoIcon /><Chevron width={1.8} /></UndoButton>
      <PlainButton aria-label="重做"><RedoIcon /></PlainButton>
      <PlainButton aria-label="自定义快速访问工具栏"><MenuMore /></PlainButton>
    </QuickTools>
    <DocName>
      <span>客户答谢会执行方案.docx</span>
      <span>-</span>
      <span>Word</span>
    </DocName>
    <TitleSearch>
      <TitleSearchIcon />
      <BareInput placeholder="搜索" aria-label="搜索" />
    </TitleSearch>
    <Account>
      张伟
      <Avatar>ZW</Avatar>
    </Account>
    <WindowButtons>
      <PlainButton aria-label="最小化">
        <svg width="16" height="16" viewBox="0 0 16 16" stroke="#fff" strokeWidth="1.500"><path d="M1 8h14" /></svg>
      </PlainButton>
      <PlainButton aria-label="最大化">
        <svg width="16" height="16" viewBox="0 0 16 16" fill="none" stroke="#fff" strokeWidth="1.500"><rect x="2" y="2" width="12" height="12" rx="1" /></svg>
      </PlainButton>
      <PlainButton aria-label="关闭">
        <svg width="16" height="16" viewBox="0 0 16 16" stroke="#fff" strokeWidth="1.500"><path d="M1.500 1.500l13 13M14.500 1.500l-13 13" /></svg>
      </PlainButton>
    </WindowButtons>
  </TitleBar>
);

const RibbonPanel = () => (
  <Ribbon>
    <RibbonGroup name="表" width={143} inset={18}>
      <Stack>
        <RowButton><ArrowIcon />选择<Chevron /></RowButton>
        <RowButton><GridLinesIcon />查看网格线</RowButton>
        <RowButton><PropertiesIcon />属性</RowButton>
      </Stack>
    </RibbonGroup>
    <RibbonGroup name="绘图" width={134} inset={9}>
      <BigTool icon={<DrawTableIcon />} lines={["绘制", "表格"]} width={58} />
      <BigTool icon={<EraserIcon />} lines={["橡皮擦"]} width={56} />
    </RibbonGroup>
    <RibbonGroup name="行和列" width={325} inset={8} trail={12} launcher>
      <BigTool icon={<DeleteIcon />} lines={["删除"]} width={59} menu />
      <Divider $inner />
      <BigTool icon={<InsertAboveIcon />} lines={["在上方", "插入"]} />
      <BigTool icon={<InsertBelowIcon />} lines={["在下方", "插入"]} width={59} />
      <BigTool icon={<InsertLeftIcon />} lines={["在左侧", "插入"]} />
      <BigTool icon={<InsertRightIcon />} lines={["在右侧", "插入"]} width={59} />
    </RibbonGroup>
    <RibbonGroup name="合并" width={202} inset={14}>
      <BigTool icon={<MergeIcon />} lines={["合并", "单元格"]} width={62} hot />
      <BigTool icon={<SplitCellIcon />} lines={["拆分", "单元格"]} width={56} />
      <BigTool icon={<SplitCellIcon />} lines={["拆分", "表格"]} width={60} />
    </RibbonGroup>
    <RibbonGroup name="单元格大小" width={372} inset={14} trail={22} launcher>
      <BigTool icon={<AutoFitIcon />} lines={["自动调整"]} menu />
      <ShortDivider />
      <SizeRows>
        <SizeField id="cell-height" label="高度" value="1.02 厘米" icon={<HeightIcon />} spread="分布行" rows />
        <SizeField id="cell-width" label="宽度" value="3.29 厘米" icon={<WidthIcon />} spread="分布列" />
      </SizeRows>
    </RibbonGroup>
    <RibbonGroup name="对齐方式" width={237} inset={14} trail={8}>
      <AlignGrid>
        {[0, 1, 2, 3, 4, 5, 6, 7, 8].map((n) => (
          <AlignButton key={n} $on={n === 1 || n === 2} aria-label={`对齐 ${n + 1}`}>
            <AlignIcon row={n === 1 ? 3 : Math.floor(n / 3)} />
          </AlignButton>
        ))}
      </AlignGrid>
      <BigTool icon={<TextDirectionIcon />} lines={["文字", "方向"]} width={58} />
      <BigTool icon={<CellMarginIcon />} lines={["单元格", "边距"]} width={59} />
    </RibbonGroup>
    <RibbonGroup name="数据" width={194} inset={5}>
      <BigTool icon={<SortIcon />} lines={["排序"]} />
      <Stack $lead={5}>
        <RowButton $dim><RepeatHeaderIcon />重复标题行</RowButton>
        <RowButton><ToTextIcon />转换为文本</RowButton>
        <RowButton><Formula>fx</Formula>公式</RowButton>
      </Stack>
    </RibbonGroup>
    <Collapse aria-label="折叠功能区"><Chevron w={14} width={1.1} /></Collapse>
  </Ribbon>
);

const StaffTable = () => (
  <Sheet>
    <colgroup>
      <col style={{ width: 123 }} />
      <col style={{ width: 168 }} />
      <col style={{ width: 195 }} />
      <col />
    </colgroup>
    <thead>
      <tr>
        {["时段", "岗位", "人员", "职责"].map((h) => (
          <HeadCell key={h} scope="col">{h}</HeadCell>
        ))}
      </tr>
    </thead>
    <tbody>
      {staff.map((row) => (
        <tr key={row.post}>
          <Cell $pick={row.pick}>{row.stage}</Cell>
          <Cell>{row.post}</Cell>
          <Cell $trail={5}>{row.people}</Cell>
          <Cell $left>
            {row.duty.map((text) => (
              <div key={text}>{text}</div>
            ))}
          </Cell>
        </tr>
      ))}
    </tbody>
  </Sheet>
);

export default function App() {
  return (
    <Window>
      <GlobalStyle />
      <AppTitle />
      <TabRow>
        <Tabs>
          {tabs.map((t, i) => (
            <Tab key={i} $tone={t.tone}>{t.name}</Tab>
          ))}
        </Tabs>
        <TabActions>
          <ActionButton><CommentIcon />批注</ActionButton>
          <ActionButton><PencilIcon />编辑<Chevron /></ActionButton>
          <ActionButton $primary><ShareIcon />共享<Chevron /></ActionButton>
        </TabActions>
      </TabRow>
      <RibbonPanel />
      <Workspace>
        <RulerCorner>
          <svg width="8" height="8" viewBox="0 0 8 8" stroke="#444" strokeWidth="3" fill="none"><path d="M1.500 0v6H8" /></svg>
        </RulerCorner>
        <TopRuler><HorizontalScale /></TopRuler>
        <SideRuler><VerticalScale /></SideRuler>
        <Desk>
          <Paper>
            <CaretLine />
            <HeadingRow>
              <MoveHandle />
              <Heading>二、岗位分工表</Heading>
            </HeadingRow>
            <StaffTable />
          </Paper>
        </Desk>
      </Workspace>
      <StatusBar>
        <StatusSide $gap={23}>
          <span>第 1 页，共 1 页</span>
          <span>124 个字</span>
          <PlainButton aria-label="校对"><ProofIcon /></PlainButton>
          <StatusButton>中文(中国)</StatusButton>
          <StatusButton $before={8}><AccessIcon />辅助功能: 一切就绪</StatusButton>
        </StatusSide>
        <StatusSide $gap={0}>
          <StatusButton $after={15}><FocusIcon />专注</StatusButton>
          <ViewButton aria-label="阅读视图"><ReadIcon /></ViewButton>
          <ViewButton $on aria-label="页面视图"><PrintIcon /></ViewButton>
          <ViewButton aria-label="Web 版式视图"><WebIcon /></ViewButton>
          <Zoom>
            <PlainButton aria-label="缩小">
              <svg width="10" height="10" viewBox="0 0 10 10" {...line} strokeWidth="1"><path d="M0 5.500h10" /></svg>
            </PlainButton>
            <ZoomSlider type="range" min="0" max="100" defaultValue="53" aria-label="缩放" />
            <PlainButton aria-label="放大">
              <svg width="10" height="10" viewBox="0 0 10 10" {...line} strokeWidth="1"><path d="M0 5.500h10M5.500 0v10" /></svg>
            </PlainButton>
          </Zoom>
          <span>130%</span>
        </StatusSide>
      </StatusBar>
      <Taskbar>
        <PlainButton aria-label="开始"><StartIcon /></PlainButton>
        <TaskSearch>
          <MagnifierIcon />
          <BareInput placeholder="搜索" aria-label="搜索" />
        </TaskSearch>
        <Apps>
          <PlainButton aria-label="文件资源管理器"><FolderIcon /></PlainButton>
          <PlainButton aria-label="浏览器"><EdgeIcon /></PlainButton>
          <ActiveApp aria-label="Word"><WordAppIcon /><ActiveMark /></ActiveApp>
        </Apps>
        <Tray>
          <PlainButton aria-label="显示隐藏的图标"><Chevron w={15} up width={1.2} /></PlainButton>
          <PlainButton aria-label="输入法"><ImeIcon /></PlainButton>
          <ImeMode>中</ImeMode>
          <ImeBox>拼</ImeBox>
          <SystemButton aria-label="网络和音量"><MonitorIcon /><SpeakerIcon /></SystemButton>
          <Clock>
            10:28
            <br />
            2024/5/20
          </Clock>
        </Tray>
      </Taskbar>
    </Window>
  );
}
